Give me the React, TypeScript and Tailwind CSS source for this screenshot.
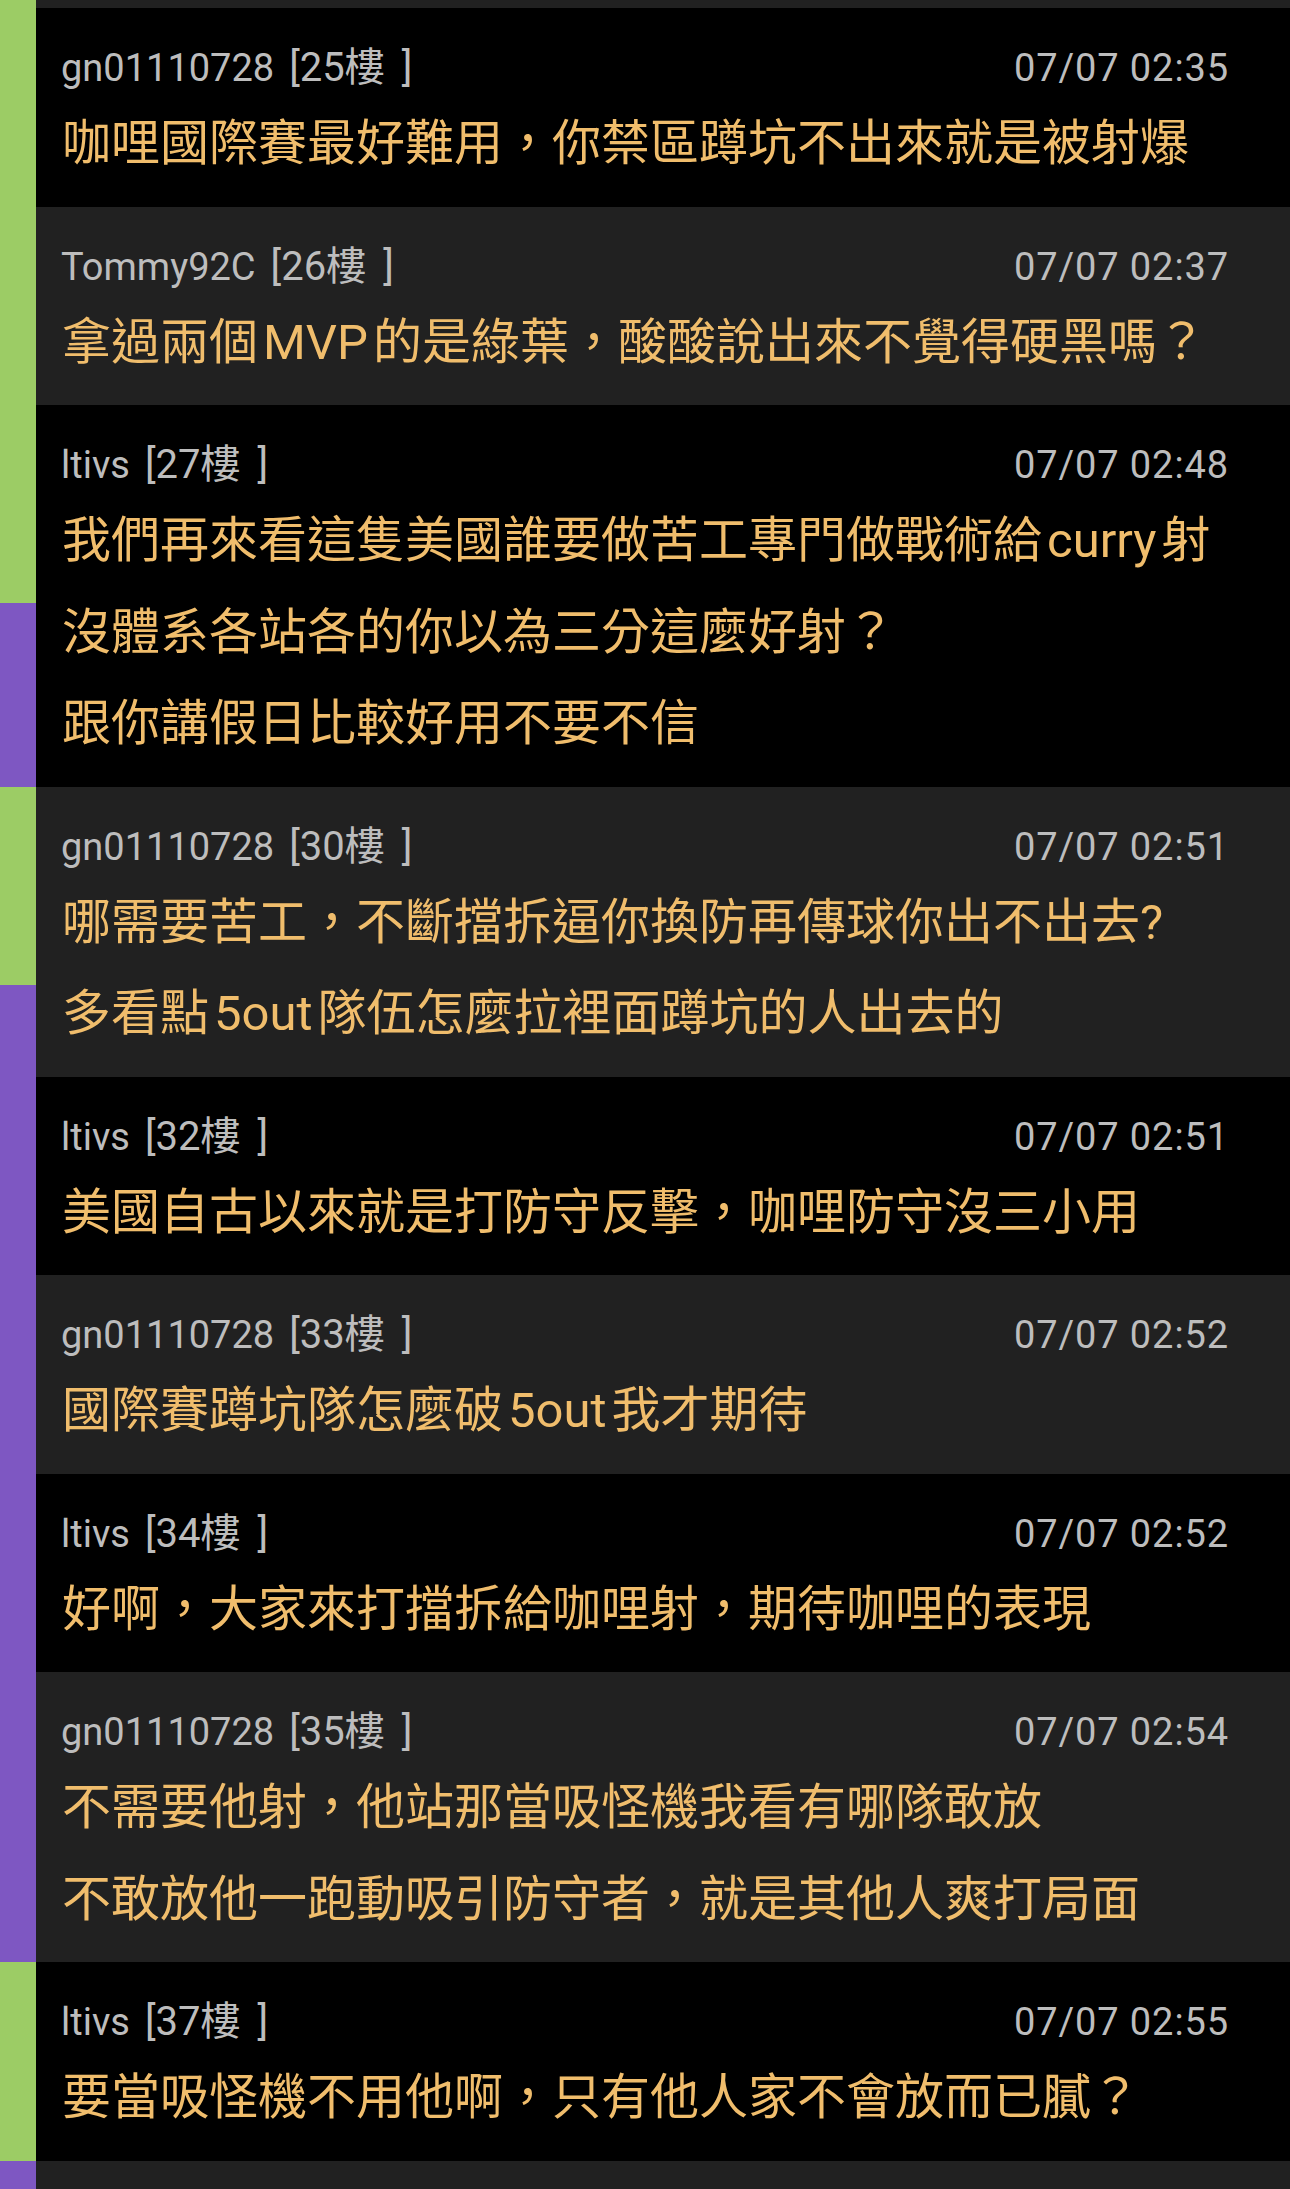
import React from 'react';

type Post = {
  user: string;
  floor: number;
  time: string;
  lines: string[];
  dark: boolean;
  bars: string[];
};

const GREEN = 'bg-[#9ccc65]';
const PURPLE = 'bg-[#7e57c2]';

const posts: Post[] = [
  { user: 'gn01110728', floor: 25, time: '07/07 02:35', dark: true, bars: [GREEN], lines: ['咖哩國際賽最好難用，你禁區蹲坑不出來就是被射爆'] },
  { user: 'Tommy92C', floor: 26, time: '07/07 02:37', dark: false, bars: [GREEN], lines: ['拿過兩個 MVP 的是綠葉，酸酸說出來不覺得硬黑嗎？'] },
  {
    user: 'ltivs', floor: 27, time: '07/07 02:48', dark: true, bars: [GREEN, PURPLE],
    lines: ['我們再來看這隻美國誰要做苦工專門做戰術給 curry 射', '沒體系各站各的你以為三分這麼好射？', '跟你講假日比較好用不要不信'],
  },
  {
    user: 'gn01110728', floor: 30, time: '07/07 02:51', dark: false, bars: [GREEN, PURPLE],
    lines: ['哪需要苦工，不斷擋拆逼你換防再傳球你出不出去?', '多看點 5out 隊伍怎麼拉裡面蹲坑的人出去的'],
  },
  { user: 'ltivs', floor: 32, time: '07/07 02:51', dark: true, bars: [PURPLE], lines: ['美國自古以來就是打防守反擊，咖哩防守沒三小用'] },
  { user: 'gn01110728', floor: 33, time: '07/07 02:52', dark: false, bars: [PURPLE], lines: ['國際賽蹲坑隊怎麼破 5out 我才期待'] },
  { user: 'ltivs', floor: 34, time: '07/07 02:52', dark: true, bars: [PURPLE], lines: ['好啊，大家來打擋拆給咖哩射，期待咖哩的表現'] },
  {
    user: 'gn01110728', floor: 35, time: '07/07 02:54', dark: false, bars: [PURPLE],
    lines: ['不需要他射，他站那當吸怪機我看有哪隊敢放', '不敢放他一跑動吸引防守者，就是其他人爽打局面'],
  },
  { user: 'ltivs', floor: 37, time: '07/07 02:55', dark: true, bars: [GREEN], lines: ['要當吸怪機不用他啊，只有他人家不會放而已膩？'] },
];

function Bar({ colors }: { colors: string[] }) {
  return (
    <div className="w-[36px] shrink-0 flex flex-col">
      {colors.map((c, i) => (
        <div key={i} className={`${c} ${i === 0 && colors.length > 1 ? 'h-[198px]' : 'flex-1'}`}></div>
      ))}
    </div>
  );
}

// latin words sit a little apart from the hanzi, narrower than a full space
function Line({ text }: { text: string }) {
  const parts = text.split(' ');
  return (
    <div className="whitespace-nowrap">
      {parts.map((p, i) => (
        <React.Fragment key={i}>
          {i > 0 && <span className="inline-block w-[5px]"></span>}
          {p}
        </React.Fragment>
      ))}
    </div>
  );
}

function PostRow({ post }: { post: Post }) {
  return (
    <div className={`flex ${post.dark ? 'bg-black' : 'bg-[#212121]'}`}>
      <Bar colors={post.bars} />
      <div className="flex-1 min-w-0 pl-[25px] pr-[61px] pt-[36px] pb-[17px]">
        <div className="flex items-baseline justify-between text-[38px] leading-[48px] text-[#bdbdbd]">
          <span className="whitespace-nowrap">
            {post.user}
            <span className="ml-[15px] text-[40px]">
              [{post.floor}樓<span className="ml-[17px]">]</span>
            </span>
          </span>
          <span className="tracking-[0.9px]">{post.time}</span>
        </div>
        <div className="mt-[6px] pl-[1px] text-[49px] leading-[91.5px] text-[#f0bd6c]">
          {post.lines.map((line, i) => (
            <Line key={i} text={line} />
          ))}
        </div>
      </div>
    </div>
  );
}

export default function App() {
  return (
    <div className="min-h-screen flex flex-col bg-black font-['Roboto','Noto_Sans_CJK_TC',sans-serif]">
      <div className="flex h-[8px] bg-[#212121]">
        <div className={`w-[36px] ${GREEN}`}></div>
      </div>
      {posts.map((p, i) => (
        <PostRow key={i} post={p} />
      ))}
      <div className="flex flex-1 bg-[#212121]">
        <div className={`w-[36px] ${PURPLE}`}></div>
      </div>
    </div>
  );
}
